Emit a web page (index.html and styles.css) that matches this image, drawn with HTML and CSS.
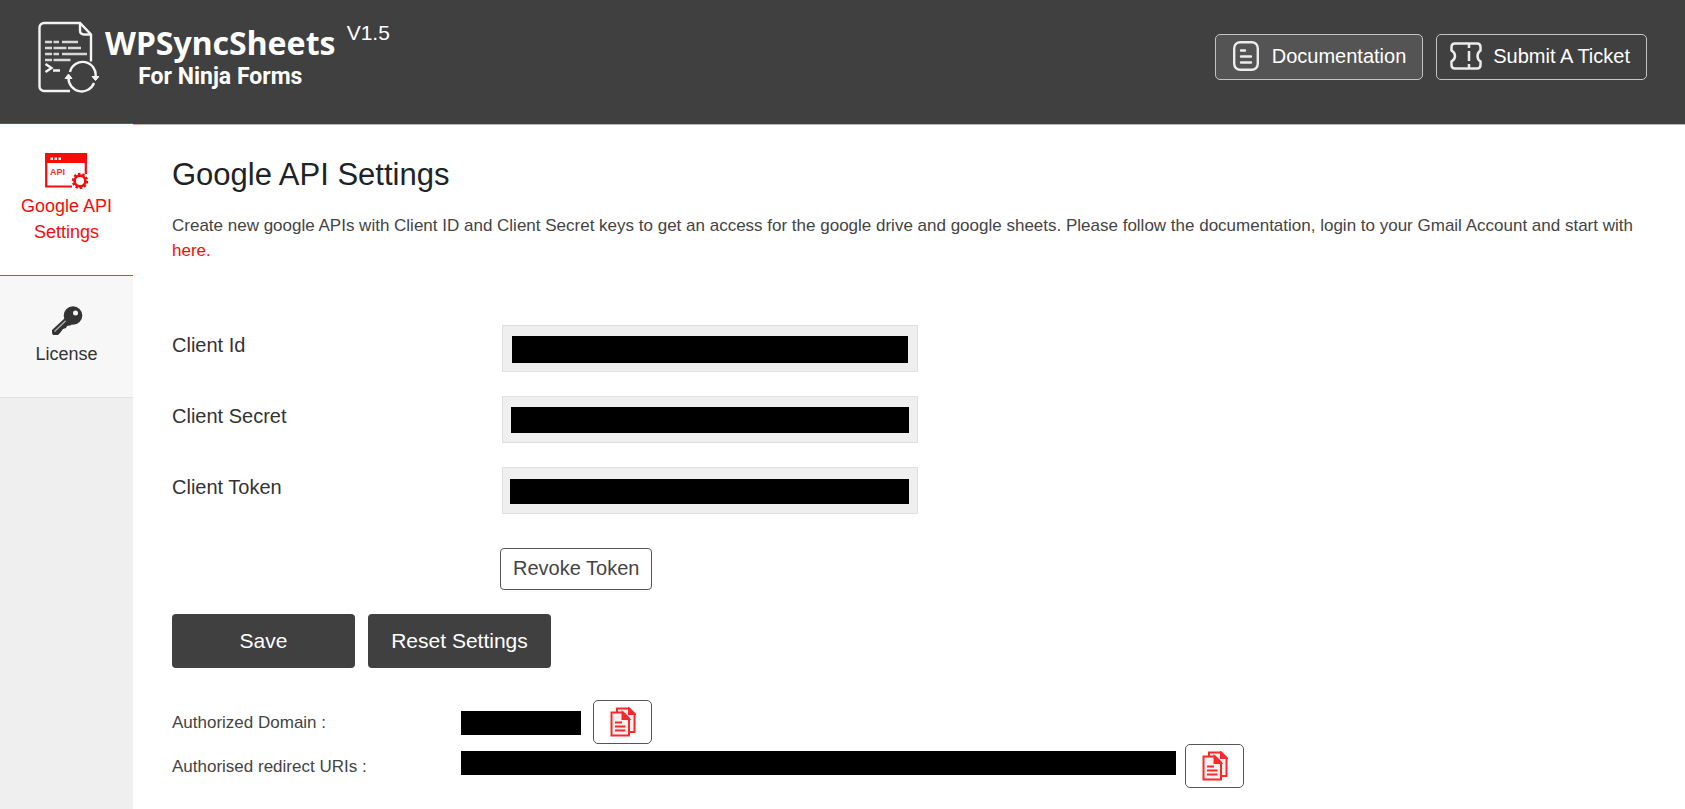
FILE: index.html
```html
<!DOCTYPE html>
<html lang="en">
<head>
<meta charset="utf-8">
<meta name="viewport" content="width=device-width, initial-scale=1">
<title>WPSyncSheets For Ninja Forms</title>
<link rel="stylesheet" href="styles.css">
</head>
<body>
<header class="header">
  <div class="brand">
    <svg class="brand-icon" width="62" height="72" viewBox="0 0 62 72" fill="none" stroke="#f4f4f4" stroke-width="2.400" aria-hidden="true">
      <path d="M33 70H7a4.500 4.500 0 0 1-4.500-4.500V6.500A4.500 4.500 0 0 1 7 2h36l11 11.500v27"/>
      <path d="M43 2v7.500q0 4 4 4h7"/>
      <path d="M8 21h7M16.500 21h5.500M25 21h16M8 27h7M16.500 27h13M31 27h13M8 33h7M16.500 33h5.500M25 33h25M8 39h7M16.500 39h17" stroke="#d8d8d8"/>
      <path d="M8.500 43l6 4-6 4M16 49.500h7"/>
      <path d="M33 51a13 13 0 0 1 25.500 5M57 62a13.200 13.200 0 0 1-25.500-5"/>
      <path d="M55 55.500h7l-3.500 4zM28 57.500h7l-3.500-4.500z" fill="#f4f4f4" stroke-width="1"/>
    </svg>
    <div class="brand-text">
      <span class="brand-name">WPSyncSheets</span>
      <span class="brand-sub">For Ninja Forms</span>
    </div>
    <span class="version">V1.5</span>
  </div>
  <nav class="header-links">
    <a class="header-link header-link-active" href="#documentation">
      <svg width="26" height="30" viewBox="0 0 26 30" fill="none" stroke="#ececec" stroke-width="2.400" aria-hidden="true">
        <rect x="1.200" y="1.200" width="23.600" height="27.600" rx="6"/>
        <path d="M8 9.500h4M8 15.500h10M8 21.500h10" stroke-linecap="round"/>
      </svg>
      Documentation
    </a>
    <a class="header-link" href="#ticket">
      <svg width="32" height="28" viewBox="0 0 32 28" fill="none" stroke="#ececec" stroke-width="2.500" aria-hidden="true">
        <path d="M5 1.500h22q3.500 0 3.500 3.500v3.500q-3 2-3 5.500t3 5.500V23q0 3.500-3.500 3.500H5Q1.500 26.500 1.500 23v-3.500q3.500-2 3.500-5.500T1.500 8.500V5q0-3.500 3.500-3.500z"/>
        <path d="M19 2v4M19 9v10M19 22v4"/>
      </svg>
      Submit A Ticket
    </a>
  </nav>
</header>
<div class="layout">
  <nav class="sidebar">
    <a class="tab tab-active" href="#api">
      <svg width="44" height="37" viewBox="0 0 44 37" aria-hidden="true">
        <path d="M1.200 1h39.600v20M27 33.500H1.200V1" fill="none" stroke="#f60c0c" stroke-width="2.200"/>
        <path d="M0 0h42v10H0z" fill="#f60c0c"/>
        <path d="M5.500 4.500h2.500v2.500H5.500zM9.500 4.500h2.500v2.500H9.500zM13.500 4.500h2.500v2.500h-2.500z" fill="#fff"/>
        <text class="icon-label" x="5" y="22">API</text>
        <circle cx="35" cy="28" r="7" fill="none" stroke="#f60c0c" stroke-width="2.400" stroke-dasharray="2.400 1.998"/>
        <circle cx="35" cy="28" r="5.400" fill="#fff" stroke="#f60c0c" stroke-width="2.600"/>
      </svg>
      <span>Google API Settings</span>
    </a>
    <a class="tab" href="#license">
      <svg width="32" height="30" viewBox="0 0 32 30" aria-hidden="true">
        <path d="M1 24L14 12l7 7-5 1-1 2-3 1-3 4-2 2H2l-1-2z" fill="#333"/>
        <path d="M3.500 25.500L15 14.500" stroke="#aaa" stroke-width="1.500"/>
        <circle cx="22" cy="9.500" r="9.300" fill="#333"/>
        <circle cx="24.500" cy="7" r="2.500" fill="#f7f7f7"/>
      </svg>
      <span>License</span>
    </a>
  </nav>
  <main class="content">
    <h1 class="title">Google API Settings</h1>
    <p class="intro">Create new google APIs with Client ID and Client Secret keys to get an access for the google drive and google sheets. Please follow the documentation, login to your Gmail Account and start with <a class="intro-link" href="#here">here.</a></p>
    <form class="form">
      <div class="field">
        <label class="field-label" for="client-id">Client Id</label>
        <input class="field-input" id="client-id" type="text" readonly>
      </div>
      <div class="field">
        <label class="field-label" for="client-secret">Client Secret</label>
        <input class="field-input field-input-secret" id="client-secret" type="text" readonly>
      </div>
      <div class="field">
        <label class="field-label" for="client-token">Client Token</label>
        <input class="field-input field-input-token" id="client-token" type="text" readonly>
      </div>
      <button class="revoke" type="button">Revoke Token</button>
      <div class="actions">
        <button class="action" type="button">Save</button>
        <button class="action" type="button">Reset Settings</button>
      </div>
    </form>
    <div class="copy-row">
      <span class="copy-label">Authorized Domain :</span>
      <span class="redacted redacted-domain"></span>
      <button class="copy" type="button" aria-label="Copy authorized domain">
        <svg width="26" height="30" viewBox="0 0 26 30" fill="#fff0f0" stroke="#f8282c" stroke-width="2" aria-hidden="true">
          <path d="M7 5V1.500h12l5.500 5.500v18H19"/>
          <path d="M19 1.500V7h5.500z" fill="#f8282c"/>
          <path d="M1.500 5.500H13l6 6V28.500H1.500z"/>
          <path d="M12.500 5.500V12H19z" fill="#f8282c"/>
          <path d="M5 15.500h7M5 19.500h10.500M5 23.500h10.500"/>
        </svg>
      </button>
    </div>
    <div class="copy-row">
      <span class="copy-label">Authorised redirect URIs :</span>
      <span class="redacted redacted-uri"></span>
      <button class="copy" type="button" aria-label="Copy redirect URIs">
        <svg width="26" height="30" viewBox="0 0 26 30" fill="#fff0f0" stroke="#f8282c" stroke-width="2" aria-hidden="true">
          <path d="M7 5V1.500h12l5.500 5.500v18H19"/>
          <path d="M19 1.500V7h5.500z" fill="#f8282c"/>
          <path d="M1.500 5.500H13l6 6V28.500H1.500z"/>
          <path d="M12.500 5.500V12H19z" fill="#f8282c"/>
          <path d="M5 15.500h7M5 19.500h10.500M5 23.500h10.500"/>
        </svg>
      </button>
    </div>
  </main>
</div>
</body>
</html>
```
FILE: styles.css
```css
* {
  box-sizing: border-box;
}

body {
  margin: 0;
  min-height: 100vh;
  display: flex;
  flex-direction: column;
  background: #fff;
  color: #444;
  font-family: "Liberation Sans", Arial, sans-serif;
  font-size: 17px;
  line-height: 25px;
}

a {
  color: inherit;
  text-decoration: none;
}

button,
input {
  font-family: inherit;
}

svg {
  flex: none;
  display: block;
}

.header {
  display: flex;
  justify-content: space-between;
  align-items: flex-start;
  min-height: 124px;
  padding: 21px 38px 30px 37px;
  background: #404040;
  color: #fff;
}

.brand {
  display: flex;
  align-items: flex-start;
}

.brand-text {
  display: flex;
  flex-direction: column;
  align-items: center;
  padding-left: 6px;
  font-weight: 700;
}

.brand-name {
  font-family: "Noto Sans", "Open Sans", sans-serif;
  font-size: 32px;
  line-height: 44px;
}

.brand-sub {
  font-family: Roboto, sans-serif;
  font-size: 23px;
  line-height: 24px;
}

.version {
  padding-left: 11px;
  font-size: 21px;
  line-height: 24px;
}

.header-links {
  display: flex;
  gap: 13px;
  padding-top: 13px;
}

.header-link {
  display: flex;
  align-items: center;
  gap: 11px;
  height: 46px;
  padding: 0 16px 2px 13px;
  border: 1px solid #c4c4c4;
  border-radius: 5px;
  font-size: 20px;
}

.header-link-active {
  gap: 13px;
  padding-left: 17px;
  background: #545454;
}

.layout {
  flex: 1;
  display: flex;
}

.sidebar {
  flex: none;
  width: 133px;
  margin-top: -1px;
  background: #efefef;
}

.tab {
  display: flex;
  flex-direction: column;
  align-items: center;
  gap: 2px;
  padding: 30px 16px 27px;
  border-bottom: 1px solid #e2e2e2;
  background: #f7f7f7;
  color: #333;
  font-size: 18px;
  line-height: 26px;
  text-align: center;
}

.tab span {
  padding: 3px 0;
}

.tab-active {
  gap: 0;
  padding-top: 29px;
  border-top: 1px solid #f01818;
  border-bottom-color: #f33;
  background: #fff;
  color: #f60c0c;
}

.icon-label {
  fill: #f63030;
  font-family: "Liberation Sans", Arial, sans-serif;
  font-size: 9px;
  font-weight: 700;
}

.content {
  flex: 1;
  min-width: 0;
  padding: 30px 40px 20px 39px;
  border-top: 1px solid #bbb;
}

.title {
  margin: 0;
  color: #1d2327;
  font-size: 31px;
  font-weight: 400;
  line-height: 40px;
}

.intro {
  margin: 18px 0 62px;
}

.intro-link {
  color: #f60c0c;
}

.field {
  display: flex;
  align-items: flex-start;
  margin-bottom: 24px;
}

.field-label {
  width: 330px;
  padding-top: 8px;
  color: #333;
  font-size: 20px;
}

.field-input {
  width: 416px;
  height: 47px;
  padding: 10px 9px 8px;
  border: 1px solid #e0e0e0;
  background: linear-gradient(#000, #000) content-box, #efefef;
}

.field-input-secret {
  padding: 10px 8px 9px;
}

.field-input-token {
  padding: 11px 8px 9px 7px;
}

.revoke {
  display: block;
  height: 42px;
  margin: 34px 0 24px 328px;
  padding: 0 12px 2px;
  border: 1px solid #555;
  border-radius: 4px;
  background: #fff;
  color: #444;
  font-size: 20px;
}

.actions {
  display: flex;
  gap: 13px;
  margin-bottom: 32px;
}

.action {
  width: 183px;
  height: 54px;
  padding: 0;
  border: 0;
  border-radius: 4px;
  background: #404040;
  color: #fff;
  font-size: 21px;
}

.copy-row {
  display: flex;
  align-items: center;
}

.copy-label {
  width: 289px;
}

.redacted {
  height: 24px;
  background: #000;
}

.redacted-domain {
  width: 120px;
  margin: 2px 12px 0 0;
}

.redacted-uri {
  width: 715px;
  margin: 0 9px 6px 0;
}

.copy {
  display: flex;
  align-items: center;
  justify-content: center;
  width: 59px;
  height: 44px;
  padding: 0;
  border: 1px solid #555;
  border-radius: 5px;
  background: #fff;
}
```
